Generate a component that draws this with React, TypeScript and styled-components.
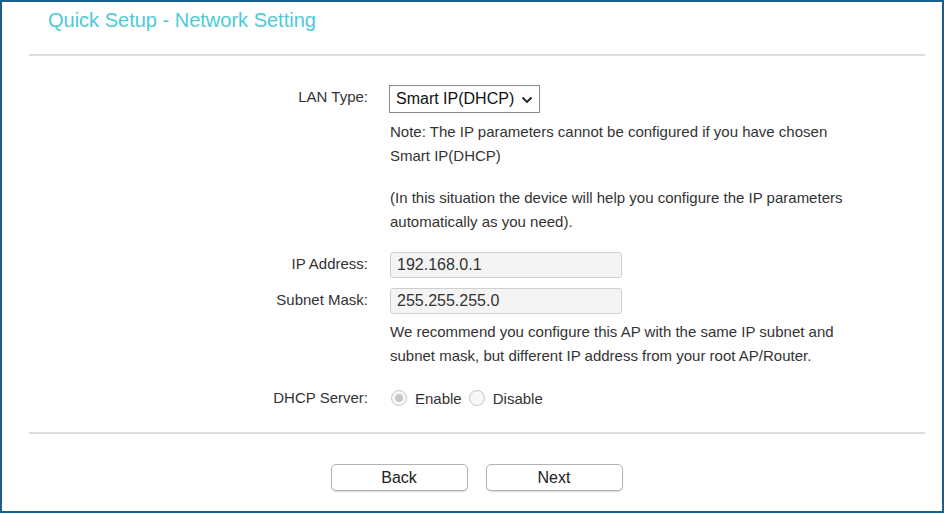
import styled, { createGlobalStyle } from "styled-components";

const GlobalStyle = createGlobalStyle`
  html, body {
    margin: 0;
    padding: 0;
    background: #ffffff;
  }
  * {
    box-sizing: border-box;
  }
`;

export default function App() {
  return (
    <>
      <GlobalStyle />
      <Frame>
        <Title>Quick Setup - Network Setting</Title>
        <Divider />
        <Form>
          <Row>
            <Label>LAN Type:</Label>
            <Control>
              <Select>
                Smart IP(DHCP)
                <svg width="12" height="8" viewBox="0 0 12 8">
                  <path
                    d="M1.5 1.5 L6 6 L10.5 1.5"
                    fill="none"
                    stroke="#222"
                    strokeWidth="1.8"
                  />
                </svg>
              </Select>
              <Note>
                Note: The IP parameters cannot be configured if you have chosen
                <br />
                Smart IP(DHCP)
              </Note>
              <Note $gap>
                (In this situation the device will help you configure the IP
                parameters
                <br />
                automatically as you need).
              </Note>
            </Control>
          </Row>
          <Row $top={19}>
            <Label>IP Address:</Label>
            <Control>
              <Field>192.168.0.1</Field>
            </Control>
          </Row>
          <Row $top={10}>
            <Label>Subnet Mask:</Label>
            <Control>
              <Field>255.255.255.0</Field>
              <Note $small>
                We recommend you configure this AP with the same IP subnet and
                <br />
                subnet mask, but different IP address from your root AP/Router.
              </Note>
            </Control>
          </Row>
          <Row $top={21}>
            <Label $radio>DHCP Server:</Label>
            <Control>
              <RadioGroup>
                <RadioItem>
                  <Radio $checked />
                  Enable
                </RadioItem>
                <RadioItem>
                  <Radio />
                  Disable
                </RadioItem>
              </RadioGroup>
            </Control>
          </Row>
        </Form>
        <Divider $top={24} />
        <Buttons>
          <Button>Back</Button>
          <Button>Next</Button>
        </Buttons>
      </Frame>
    </>
  );
}

const Frame = styled.div`
  width: 944px;
  height: 513px;
  border: 2px solid #1d5f8c;
  font-family: "Liberation Sans", Arial, sans-serif;
  color: #333333;
  overflow: hidden;
`;

const Title = styled.h1`
  margin: 6px 0 0 46px;
  font-size: 20px;
  line-height: 24px;
  font-weight: 400;
  color: #4ccad8;
`;

const Divider = styled.div<{ $top?: number }>`
  height: 2px;
  margin: ${(p) => p.$top ?? 22}px 17px 0 27px;
  background: #dddddd;
`;

const Form = styled.div`
  padding-top: 29px;
`;

const Row = styled.div<{ $top?: number }>`
  display: grid;
  grid-template-columns: 366px 1fr;
  column-gap: 22px;
  align-items: start;
  margin-top: ${(p) => p.$top ?? 0}px;
`;

const Label = styled.div<{ $radio?: boolean }>`
  text-align: right;
  font-size: 15px;
  line-height: 20px;
  padding-top: ${(p) => (p.$radio ? 0 : 2)}px;
  color: #333333;
`;

const Control = styled.div`
  display: flex;
  flex-direction: column;
  align-items: flex-start;
`;

const Select = styled.div`
  display: flex;
  align-items: center;
  gap: 7px;
  width: 151px;
  height: 28px;
  margin-left: -1px;
  padding: 0 4px 0 6px;
  border: 1px solid #8a8a8a;
  font-size: 16px;
  white-space: nowrap;
  color: #111111;
  background: #ffffff;
  svg {
    flex-shrink: 0;
    margin-top: 1px;
  }
`;

const Note = styled.p<{ $gap?: boolean; $small?: boolean }>`
  margin: ${(p) => (p.$gap ? 19 : p.$small ? 6 : 7)}px 0 0 0;
  font-size: 15px;
  line-height: 23.5px;
  color: #333333;
`;

const Field = styled.div`
  width: 232px;
  height: 26px;
  padding: 0 6px;
  display: flex;
  align-items: center;
  border: 1px solid #cfcfcf;
  border-radius: 3px;
  background: #f4f4f4;
  font-size: 16px;
  color: #333333;
`;

const RadioGroup = styled.div`
  display: flex;
  align-items: center;
  height: 20px;
  gap: 6px;
`;

const RadioItem = styled.label`
  display: flex;
  align-items: center;
  gap: 8px;
  font-size: 15px;
  color: #333333;
`;

const Radio = styled.span<{ $checked?: boolean }>`
  position: relative;
  width: 16px;
  height: 16px;
  margin-left: 1px;
  border-radius: 50%;
  border: 1px solid #c6c6c6;
  background: #f7f7f7;
  &::after {
    content: "";
    display: ${(p) => (p.$checked ? "block" : "none")};
    position: absolute;
    left: 3px;
    top: 3px;
    width: 8px;
    height: 8px;
    border-radius: 50%;
    background: #c8c8c8;
  }
`;

const Buttons = styled.div`
  display: flex;
  justify-content: center;
  gap: 18px;
  padding-left: 9px;
  margin-top: 30px;
`;

const Button = styled.button`
  width: 137px;
  height: 27px;
  border: 1px solid #b3b3b3;
  border-radius: 5px;
  background: #ffffff;
  box-shadow: 0 1px 1px rgba(0, 0, 0, 0.15);
  font-family: "Liberation Sans", Arial, sans-serif;
  font-size: 16px;
  color: #222222;
  cursor: pointer;
`;
